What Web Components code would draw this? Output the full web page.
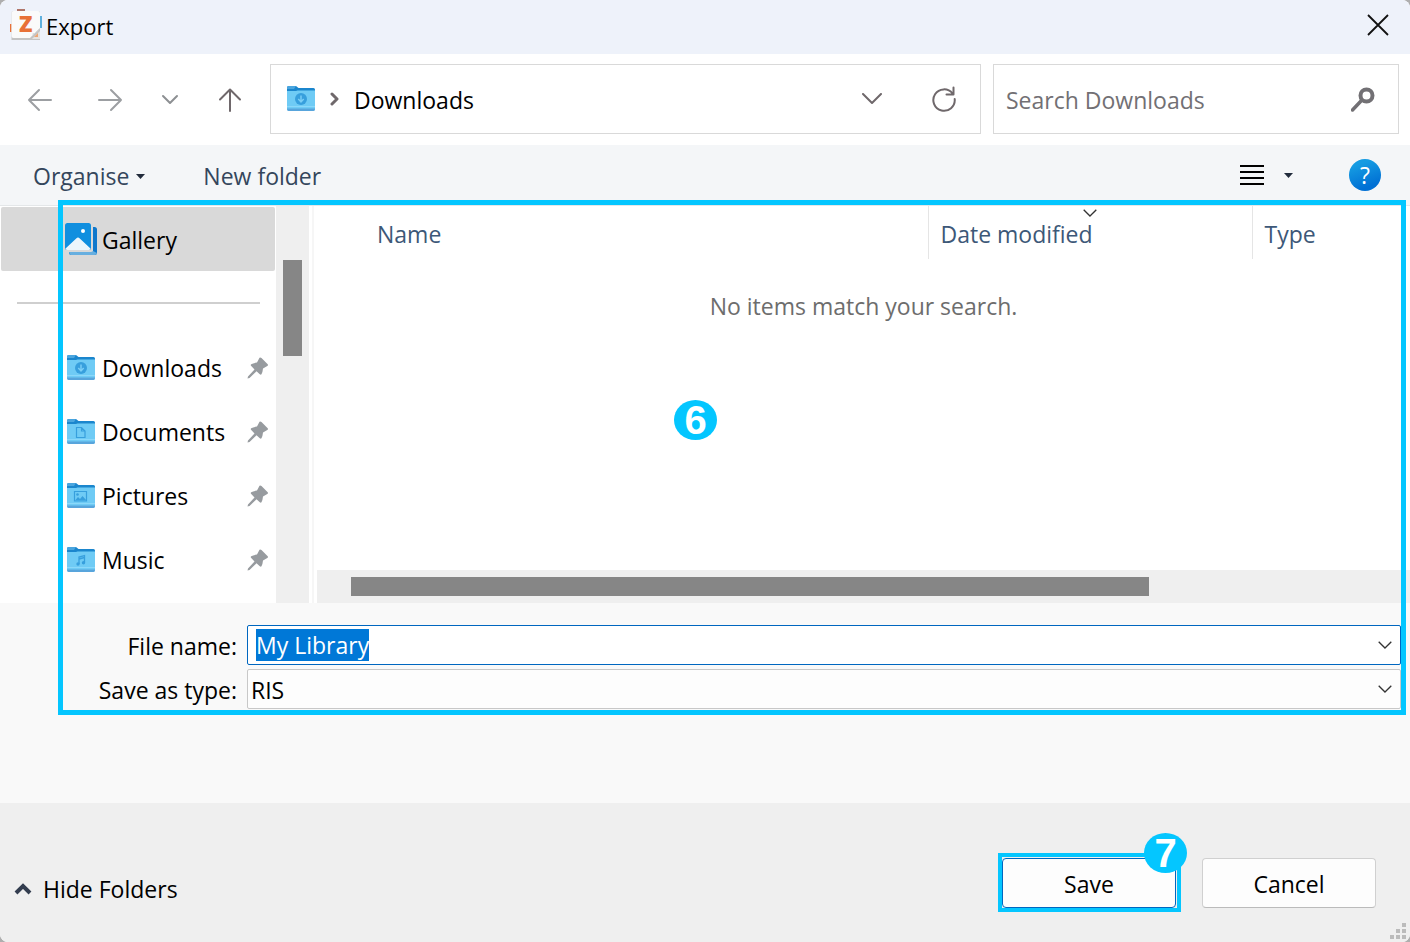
<!DOCTYPE html>
<html lang="en">
<head>
<meta charset="utf-8">
<meta name="viewport" content="width=device-width, initial-scale=1">
<title>Export</title>
<style>
  body {
    margin: 0;
    background: #aeaeae;
    font-family: "Segoe UI", "Open Sans", "Noto Sans", sans-serif;
    font-size: 23px;
    line-height: 32px;
    color: #000;
  }
</style>
</head>
<body>
<export-dialog></export-dialog>

<script>
// rules every element wants inside its own shadow root
const base = `
  * { box-sizing: border-box; }
  svg { display: block; flex: none; }
  button, input, select { font: inherit; color: inherit; margin: 0; padding: 0; border: 0; background: none; outline: none; }
`;

function attach(el, html) {
  const template = document.createElement('template');
  template.innerHTML = html;
  el.attachShadow({ mode: 'open' }).appendChild(template.content.cloneNode(true));
}

const chevron = `
  <svg width="14" height="8" viewBox="0 0 14 8" fill="none" stroke="#333" stroke-width="1.3"><path d="M.7.7 7 7 13.3.7"/></svg>
`;

class FolderIcon extends HTMLElement {
  constructor() {
    super();

    const glyphs = {
      downloads: `<circle cx="14" cy="13" r="6" fill="#379fdd"/><path d="M14 9.5v6M11.3 13l2.7 2.9 2.7-2.9" fill="none" stroke="#79cdf6" stroke-width="1.5"/>`,
      documents: `<path d="M9.5 8.5h5l3.5 3.5v6.500h-8.500zM14.500 8.500V12H18" fill="none" stroke="#379fdd" stroke-width="1.200"/>`,
      pictures: `<path d="M7.500 8.500h12v9.500h-12z" fill="none" stroke="#379fdd" stroke-width="1.200"/><circle cx="10.500" cy="11.500" r="1.300" fill="#379fdd"/><path d="m8 17.500 3-3.500 2 2 2.500-3 4 4.500z" fill="#379fdd"/>`,
      music: `<path d="M12 17V10l5.500-1.500V15.500M12 12l5.500-1.500" fill="none" stroke="#379fdd" stroke-width="1.300"/><circle cx="11" cy="17" r="1.700" fill="#379fdd"/><circle cx="16.500" cy="15.700" r="1.700" fill="#379fdd"/>`
    };

    attach(this, `
      <style>
        ${base}
        :host { display: block; flex: none; }
      </style>
      <svg width="28" height="26" viewBox="0 0 28 26" aria-hidden="true">
        <path d="M0 1.500Q0 0 1.500 0H9l2.500 2H26.500Q28 2 28 3.500V12H0z" fill="#1b86cd"/>
        <path d="M0 3V1.500Q0 0 1.500 0H9L7 3z" fill="#4aa5de"/>
        <path d="M0 5H9l1.500-.5H28V23Q28 24.500 26.500 24.500h-25Q0 24.500 0 23z" fill="#6fcbf5"/>
        <path d="M0 22.500H28Q28 25 26.500 25h-25Q0 25 0 22.500z" fill="#58a5dc"/>
        <path d="M0 20.500H28" stroke="#8bd8fa"/>
        ${glyphs[this.getAttribute('kind')]}
      </svg>
    `);
  }
}

class StepBadge extends HTMLElement {
  constructor() {
    super();
    attach(this, `
      <style>
        :host {
          display: flex;
          align-items: center;
          justify-content: center;
          width: 43px;
          height: 40px;
          border-radius: 50%;
          background: #04c6ff;
          color: #fff;
          font: bold 40px/40px "Liberation Sans", Arial, sans-serif;
        }
      </style>
      <slot></slot>
    `);
  }
}

class TitleBar extends HTMLElement {
  constructor() {
    super();
    attach(this, `
      <style>
        ${base}
        :host {
          display: flex;
          align-items: center;
          height: 54px;
          padding: 0 20px 4px 10px;
          background: #eef2fa;
        }
        svg { overflow: visible; }
        h1 { flex: 1; margin: 0 0 0 4px; padding-top: 2px; font-size: 22px; font-weight: normal; }
      </style>
      <svg width="32" height="32" viewBox="0 0 32 32" aria-hidden="true">
        <path d="M7 0h8v4H7z" fill="#b0766a"/>
        <path d="M0 15h4v8H0z" fill="#e87137"/>
        <path d="M28 7h4v12h-4z" fill="#5fb0dd"/>
        <path d="M1.500 4Q1.500 2 3.500 2h25Q30 2 30 4V31H1.500z" fill="#c4c4c4"/>
        <path d="M1.500 4Q1.500 2 3.500 2h25Q30 2 30 4V19L20 29H3.500Q1.500 29 1.500 27z" fill="#fafafa"/>
        <path d="M30 19 20 29Q23.500 27 22.500 24.500 28 24 30 19z" fill="#cfcfcf"/>
        <path d="M30 22v8h-8z" fill="#e6e3e1"/>
        <path d="m24 28 4-4v4z" fill="#eda675"/>
        <text x="9" y="23" font-family="Open Sans, sans-serif" font-weight="800" font-size="22" fill="#e87137">Z</text>
      </svg>
      <h1><slot></slot></h1>
      <button type="button" aria-label="Close">
        <svg width="24" height="24" viewBox="0 0 24 24" stroke="#111" stroke-width="1.800"><path d="m2 2 20 20M22 2 2 22"/></svg>
      </button>
    `);
  }
}

class NavBar extends HTMLElement {
  constructor() {
    super();
    attach(this, `
      <style>
        ${base}
        :host {
          display: flex;
          align-items: center;
          padding: 10px 11px 11px 0;
          background: #fff;
        }
        svg { fill: none; stroke-linecap: round; stroke-linejoin: round; }
        .step { display: flex; flex: none; align-items: center; justify-content: center; width: 60px; height: 60px; padding-top: 2px; }
        .step.back { width: 80px; }
        .box {
          display: flex;
          align-items: center;
          min-width: 0;
          height: 70px;
          border: 1px solid #d9d9d9;
        }
        .address { flex: 669; margin: 0 12px 0 10px; padding: 0 24px 0 16px; }
        .address .here { flex: 1; margin-left: 15px; padding-top: 2px; text-align: left; }
        .address .arrow { margin-left: 15px; }
        .address .refresh { margin-left: 50px; }
        .search { flex: 369; padding: 2px 23px 0 12px; }
        input { flex: 1; min-width: 0; height: 32px; }
        input::placeholder { color: #727074; opacity: 1; }
      </style>
      <button type="button" class="step back" aria-label="Back">
        <svg width="26" height="24" viewBox="0 0 26 24" stroke="#9c9fa2" stroke-width="2"><path d="M12 2 2 12l10 10M2 12h22"/></svg>
      </button>
      <button type="button" class="step" aria-label="Forward">
        <svg width="26" height="24" viewBox="0 0 26 24" stroke="#9c9fa2" stroke-width="2"><path d="m14 2 10 10-10 10M24 12H2"/></svg>
      </button>
      <button type="button" class="step" aria-label="Recent locations">
        <svg width="18" height="12" viewBox="0 0 18 12" stroke="#8d9093" stroke-width="2"><path d="m2 2 7 7 7-7"/></svg>
      </button>
      <button type="button" class="step" aria-label="Up">
        <svg width="24" height="26" viewBox="0 0 24 26" stroke="#6f686b" stroke-width="2"><path d="M2 12.500 12 2.500l10 10M12 3v21"/></svg>
      </button>
      <div class="box address">
        <folder-icon kind="downloads"></folder-icon>
        <svg class="arrow" width="9" height="14" viewBox="0 0 9 14" stroke="#6f686b" stroke-width="3"><path d="m2 2 5 5-5 5"/></svg>
        <button type="button" class="here">Downloads</button>
        <button type="button" aria-label="Previous locations">
          <svg width="20" height="12" viewBox="0 0 20 12" stroke="#6f686b" stroke-width="2"><path d="m1 1 9 9 9-9"/></svg>
        </button>
        <button type="button" class="refresh" aria-label="Refresh">
          <svg width="24" height="26" viewBox="0 0 24 26" stroke="#6f686b" stroke-width="2"><path d="M20.500 7.500A10.700 10.700 0 1 0 22.700 13M21.500 1.500v7h-7"/></svg>
        </button>
      </div>
      <div class="box search">
        <input type="text" aria-label="Search Downloads" placeholder="Search Downloads">
        <svg width="24" height="26" viewBox="0 0 24 26" stroke="#727074"><circle cx="15.500" cy="8.500" r="6" stroke-width="4"/><path d="m10 14-8.500 9" stroke-width="3.500"/></svg>
      </div>
    `);
  }
}

class ToolBar extends HTMLElement {
  constructor() {
    super();
    attach(this, `
      <style>
        ${base}
        :host {
          display: flex;
          align-items: center;
          height: 61px;
          padding: 0 29px 0 33px;
          border-bottom: 1px solid #e4e7e9;
          background: #f4f6f8;
          color: #34465c;
        }
        button { display: flex; align-items: center; }
        .text { padding-top: 2px; }
        .organise { gap: 7px; margin-right: 58px; }
        .view { gap: 20px; margin-left: auto; }
        .help {
          justify-content: center;
          width: 32px;
          height: 32px;
          margin-left: 56px;
          border-radius: 50%;
          background: linear-gradient(160deg, #159be2 20%, #0070d4 80%);
          color: #fff;
        }
      </style>
      <button type="button" class="text organise">Organise
        <svg width="9" height="5" viewBox="0 0 9 5" fill="#222c3c"><path d="M0 0h9L4.500 5z"/></svg>
      </button>
      <button type="button" class="text">New folder</button>
      <button type="button" class="view" aria-label="Change your view">
        <svg width="24" height="22" viewBox="0 0 24 22" fill="#000"><path d="M0 1h24v2H0zM0 7h24v2H0zM0 13h24v2H0zM0 19h24v2H0z"/></svg>
        <svg width="9" height="5" viewBox="0 0 9 5" fill="#222c3c"><path d="M0 0h9L4.500 5z"/></svg>
      </button>
      <button type="button" class="help" aria-label="Help">?</button>
    `);
  }
}

class TreeItem extends HTMLElement {
  constructor() {
    super();
    attach(this, `
      <style>
        ${base}
        :host { display: block; }
        button {
          display: flex;
          align-items: center;
          width: 100%;
          height: 64px;
          padding: 0 6px 0 66px;
          border-radius: 2px;
          text-align: left;
        }
        .label { flex: 1; margin-left: 7px; }
        :host([selected]) button { padding-left: 64px; background: #d9d9d9; }
        :host([selected]) .label { margin-left: 5px; padding-top: 2px; }
        :host([selected]) .pin { display: none; }
      </style>
      <button type="button">
        <slot name="icon"></slot>
        <span class="label"><slot></slot></span>
        <svg class="pin" width="22" height="22" viewBox="0 0 22 22" fill="#979b9f" aria-hidden="true">
          <path d="M12.500.7Q13.500 0 14.500 1L20.700 7.200Q21.500 8.300 20.300 9L16 11.500Q15.500 16 14.500 17.300 13.700 18.200 12.800 17.300L9.500 14.200 2.500 21 .5 21.500 1 19.500 7.500 12.400 4 8.700Q3.300 7.900 4.200 7.200 6 6 10 5.500z"/>
        </svg>
      </button>
    `);
  }
}

class FolderTree extends HTMLElement {
  constructor() {
    super();
    attach(this, `
      <style>
        ${base}
        :host { display: flex; flex: none; width: 309px; }
        nav { flex: 1; padding: 1px 1px 0; }
        .scroll { width: 33px; padding: 54px 7px 0; background: #efefef; }
        .thumb { height: 96px; background: #868686; }
        hr { height: 2px; margin: 31px 15px 32px 16px; border: 0; background: #cfcfcf; }
      </style>
      <nav aria-label="Folders">
        <tree-item selected>
          <svg slot="icon" width="32" height="32" viewBox="0 0 32 32" aria-hidden="true">
            <path d="M4 28H28V4h1.500Q32 4 32 6.500V29.500Q32 32 29.500 32H6.500Q4 32 4 29.500z" fill="#0f78cc"/>
            <path d="M4 28H28l4 2q-.5 2-2.500 2H6.500Q4 32 4 28z" fill="#67afe0"/>
            <path d="M26 2.500H28V27Q28 29 26 29H4V27z" fill="#d9d9d9"/>
            <rect width="26" height="27" rx="2.500" fill="#108fdf"/>
            <path d="M.5 25.500 11.200 15.500Q13 13.500 14.800 15.500L25.500 25.500Q25 27 23.500 27h-21Q1 27 .5 25.500z" fill="#ecf6fc"/>
            <circle cx="18" cy="8" r="2" fill="#fff"/>
          </svg>
          Gallery
        </tree-item>
        <hr>
        <tree-item><folder-icon slot="icon" kind="downloads"></folder-icon>Downloads</tree-item>
        <tree-item><folder-icon slot="icon" kind="documents"></folder-icon>Documents</tree-item>
        <tree-item><folder-icon slot="icon" kind="pictures"></folder-icon>Pictures</tree-item>
        <tree-item><folder-icon slot="icon" kind="music"></folder-icon>Music</tree-item>
      </nav>
      <div class="scroll"><div class="thumb"></div></div>
    `);
  }
}

class FileList extends HTMLElement {
  constructor() {
    super();
    attach(this, `
      <style>
        ${base}
        :host {
          display: flex;
          flex: 1;
          flex-direction: column;
          min-width: 0;
          margin-left: 3px;
          border-left: 2px solid #f6f6f6;
        }
        table { width: 100%; border-collapse: collapse; table-layout: fixed; }
        th {
          position: relative;
          height: 53px;
          padding: 2px 0 0 12px;
          border-left: 1px solid #e5e5e5;
          color: #3d5878;
          font-weight: normal;
          text-align: left;
        }
        th:first-child { padding-left: 63px; border-left: 0; }
        .date { width: 324px; }
        .type { width: 158px; }
        th svg { position: absolute; top: 3px; left: 50%; margin-left: -7px; }
        td { padding: 31px 0 0 3px; color: #6d6d6d; text-align: center; }
        .scroll { margin: auto 0 0 3px; padding: 7px 261px 7px 34px; background: #efefef; }
        .thumb { height: 19px; background: #868686; }
        step-badge { position: absolute; top: 194px; left: 674px; }
      </style>
      <table>
        <thead>
          <tr>
            <th scope="col">Name</th>
            <th class="date" scope="col">Date modified ${chevron}</th>
            <th class="type" scope="col">Type</th>
          </tr>
        </thead>
        <tbody>
          <tr><td colspan="3">No items match your search.</td></tr>
        </tbody>
      </table>
      <step-badge>6</step-badge>
      <div class="scroll"><div class="thumb"></div></div>
    `);
  }
}

class SaveFields extends HTMLElement {
  constructor() {
    super();
    attach(this, `
      <style>
        ${base}
        :host { display: block; padding: 22px 9px 94px 0; background: #f9f9f9; }
        form {
          display: grid;
          grid-template-columns: 237px 1fr;
          gap: 4px 10px;
          align-items: center;
        }
        label { padding-top: 2px; text-align: right; }
        .field {
          display: flex;
          align-items: center;
          height: 40px;
          border: 1px solid #c8c8c8;
          border-radius: 2px;
          background: #fdfdfd;
        }
        .field.active { border-color: #0067c0; background: #fff; }
        .field > * { grid-area: 1 / 1; }
        .select { display: grid; }
        .select svg { justify-self: end; margin-right: 8px; pointer-events: none; }
        input { flex: 1; min-width: 0; height: 34px; padding-left: 8px; }
        input::selection { background: #0078d7; color: #fff; }
        select { width: 100%; height: 38px; padding: 2px 0 0 3px; appearance: none; }
        .open { padding: 12px 8px; }
      </style>
      <form>
        <label for="name">File name:</label>
        <div class="field active">
          <input id="name" type="text" value="My Library" autocomplete="off" spellcheck="false">
          <button type="button" class="open" aria-label="Recent names">${chevron}</button>
        </div>
        <label for="type">Save as type:</label>
        <div class="field select">
          <select id="type"><option>RIS</option></select>
          ${chevron}
        </div>
      </form>
    `);
  }

  connectedCallback() {
    const input = this.shadowRoot.querySelector('#name');
    input.focus();
    input.select();
  }
}

class DialogFooter extends HTMLElement {
  constructor() {
    super();
    attach(this, `
      <style>
        ${base}
        :host {
          position: relative;
          display: flex;
          align-items: center;
          height: 139px;
          padding: 20px 34px 0 14px;
          background: #efefef;
        }
        .hide { display: flex; align-items: center; gap: 11px; margin: 12px auto 0 0; }
        .action {
          width: 174px;
          height: 50px;
          padding-top: 2px;
          border: 1px solid #d0d0d0;
          border-bottom-color: #bbb;
          border-radius: 4px;
          background: #fdfdfd;
        }
        .target { position: relative; margin-right: 26px; }
        .target .action { display: block; border-color: #0067c0; }
        .ring { position: absolute; inset: -5px -5px -4px -4px; border: 4px solid #04c6ff; pointer-events: none; }
        step-badge { position: absolute; top: -25px; right: -11px; }
        .grip { position: absolute; right: 4px; bottom: 2px; }
      </style>
      <button type="button" class="hide">
        <svg width="18" height="12" viewBox="0 0 18 12" fill="none" stroke="#333d4f" stroke-width="4"><path d="m2 10 7-7 7 7"/></svg>
        Hide Folders
      </button>
      <div class="target">
        <button type="button" class="action">Save</button>
        <div class="ring"></div>
        <step-badge>7</step-badge>
      </div>
      <button type="button" class="action">Cancel</button>
      <svg class="grip" width="16" height="17" viewBox="0 0 16 17" fill="#bbb" aria-hidden="true">
        <path d="M12 0h4v4h-4zM6 6h4v4H6zM12 6h4v4h-4zM0 12h4v4H0zM6 12h4v4H6zM12 12h4v4h-4z"/>
      </svg>
    `);
  }
}

class ExportDialog extends HTMLElement {
  constructor() {
    super();
    attach(this, `
      <style>
        ${base}
        :host {
          display: flex;
          flex-direction: column;
          min-height: 100vh;
          overflow: hidden;
          border-radius: 8px;
          background: #fff;
        }
        main { position: relative; display: flex; flex: 1; flex-direction: column; }
        .browse { display: flex; flex: 1; }
        .outline {
          position: absolute;
          inset: -6px 4px 88px 58px;
          border: 5px solid #04c6ff;
          pointer-events: none;
        }
      </style>
      <title-bar>Export</title-bar>
      <nav-bar></nav-bar>
      <tool-bar></tool-bar>
      <main>
        <div class="browse">
          <folder-tree></folder-tree>
          <file-list></file-list>
        </div>
        <save-fields></save-fields>
        <div class="outline"></div>
      </main>
      <dialog-footer></dialog-footer>
    `);
  }
}

customElements.define('folder-icon', FolderIcon);
customElements.define('step-badge', StepBadge);
customElements.define('title-bar', TitleBar);
customElements.define('nav-bar', NavBar);
customElements.define('tool-bar', ToolBar);
customElements.define('tree-item', TreeItem);
customElements.define('folder-tree', FolderTree);
customElements.define('file-list', FileList);
customElements.define('save-fields', SaveFields);
customElements.define('dialog-footer', DialogFooter);
customElements.define('export-dialog', ExportDialog);
</script>
</body>
</html>
